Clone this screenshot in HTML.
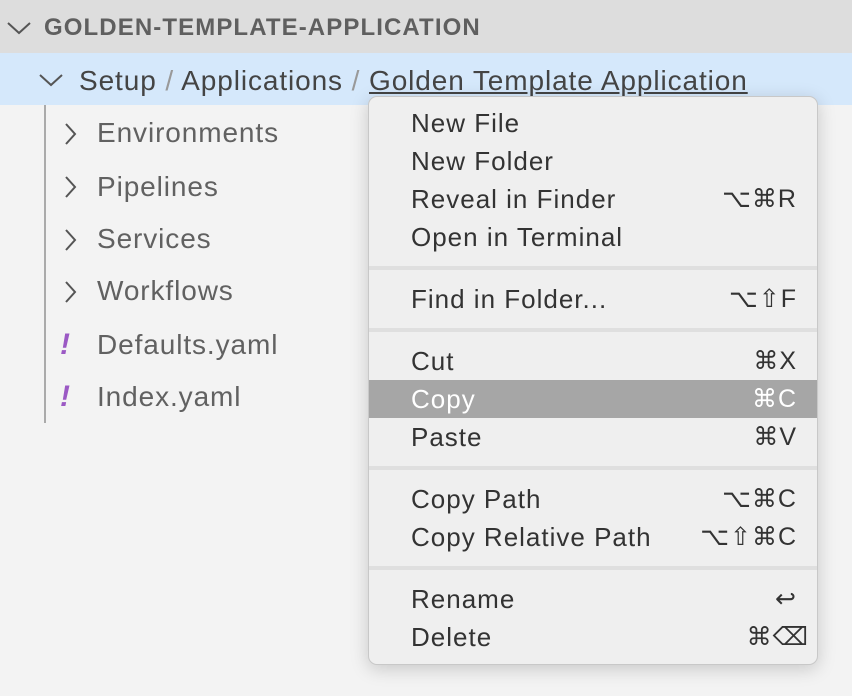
<!DOCTYPE html>
<html><head><style>
body{margin:0;width:852px;height:696px;background:#f3f3f3;font-family:"Liberation Sans",sans-serif;position:relative;overflow:hidden;color:#616161}
.a{position:absolute;white-space:nowrap}
.hdr{position:absolute;left:0;top:0;width:852px;height:53px;background:#dddddd}
.sel{position:absolute;left:0;top:53px;width:852px;height:52px;background:#d5e8fb}
.t{font-size:28px;line-height:30px;letter-spacing:0.9px}
.menu{position:absolute;left:368px;top:96px;width:448px;height:567px;background:#efefef;border:1px solid #c8c8c8;border-radius:9px;box-shadow:0 4px 18px rgba(0,0,0,.18);overflow:hidden}
.mi{position:absolute;left:0;width:448px;height:38px;font-size:26px;line-height:38px;color:#333;letter-spacing:1px}
.mi span{position:absolute;left:42px}
.mi b{position:absolute;right:20px;font-weight:normal;letter-spacing:1px;font-size:25px}
.sep{position:absolute;left:0;width:448px;height:4px;background:#dfdfdf}
</style></head><body>
<div class="hdr"></div>
<div class="sel"></div>
<svg class="a" style="left:6px;top:20px" width="26" height="16"><path d="M2 3 L13 13 L24 3" stroke="#555" stroke-width="2" fill="none"/></svg>
<div class="a" style="left:44px;top:13px;font-size:24px;font-weight:bold;line-height:30px;color:#5f5f5f;letter-spacing:1.1px">GOLDEN-TEMPLATE-APPLICATION</div>
<svg class="a" style="left:38px;top:72px" width="26" height="16"><path d="M2 3 L13 13 L24 3" stroke="#555" stroke-width="2" fill="none"/></svg>
<div class="a t" style="left:79px;top:66px;color:#444">Setup <span style="color:#999">/</span> Applications <span style="color:#999">/</span> <span style="text-decoration:underline">Golden Template Application</span></div>
<div class="a" style="left:44px;top:105px;width:2px;height:318px;background:#aaa"></div>
<svg class="a" style="left:62px;top:122px" width="16" height="24"><path d="M4 2 L13 12 L4 22" stroke="#555" stroke-width="2" fill="none"/></svg>
<div class="a t" style="left:97px;top:118px">Environments</div>
<svg class="a" style="left:62px;top:175px" width="16" height="24"><path d="M4 2 L13 12 L4 22" stroke="#555" stroke-width="2" fill="none"/></svg>
<div class="a t" style="left:97px;top:172px">Pipelines</div>
<svg class="a" style="left:62px;top:228px" width="16" height="24"><path d="M4 2 L13 12 L4 22" stroke="#555" stroke-width="2" fill="none"/></svg>
<div class="a t" style="left:97px;top:224px">Services</div>
<svg class="a" style="left:62px;top:280px" width="16" height="24"><path d="M4 2 L13 12 L4 22" stroke="#555" stroke-width="2" fill="none"/></svg>
<div class="a t" style="left:97px;top:276px">Workflows</div>
<div class="a" style="left:60px;top:328px;font-size:30px;font-weight:bold;font-style:italic;color:#9b59c4">!</div>
<div class="a t" style="left:97px;top:330px">Defaults.yaml</div>
<div class="a" style="left:60px;top:380px;font-size:30px;font-weight:bold;font-style:italic;color:#9b59c4">!</div>
<div class="a t" style="left:97px;top:382px">Index.yaml</div>

<div class="menu">
<div class="mi" style="top:7px"><span>New File</span></div>
<div class="mi" style="top:45px"><span>New Folder</span></div>
<div class="mi" style="top:83px"><span>Reveal in Finder</span><b>⌥⌘R</b></div>
<div class="mi" style="top:121px"><span>Open in Terminal</span></div>
<div class="sep" style="top:169px"></div>
<div class="mi" style="top:183px"><span>Find in Folder...</span><b>⌥⇧F</b></div>
<div class="sep" style="top:231px"></div>
<div class="mi" style="top:245px"><span>Cut</span><b>⌘X</b></div>
<div class="mi" style="top:283px;background:#a6a6a6;color:#fff"><span>Copy</span><b>⌘C</b></div>
<div class="mi" style="top:321px"><span>Paste</span><b>⌘V</b></div>
<div class="sep" style="top:369px"></div>
<div class="mi" style="top:383px"><span>Copy Path</span><b>⌥⌘C</b></div>
<div class="mi" style="top:421px"><span>Copy Relative Path</span><b>⌥⇧⌘C</b></div>
<div class="sep" style="top:469px"></div>
<div class="mi" style="top:483px"><span>Rename</span><b>↩</b></div>
<div class="mi" style="top:521px"><span>Delete</span><b style="right:8px">⌘⌫</b></div>
</div>
</body></html>
